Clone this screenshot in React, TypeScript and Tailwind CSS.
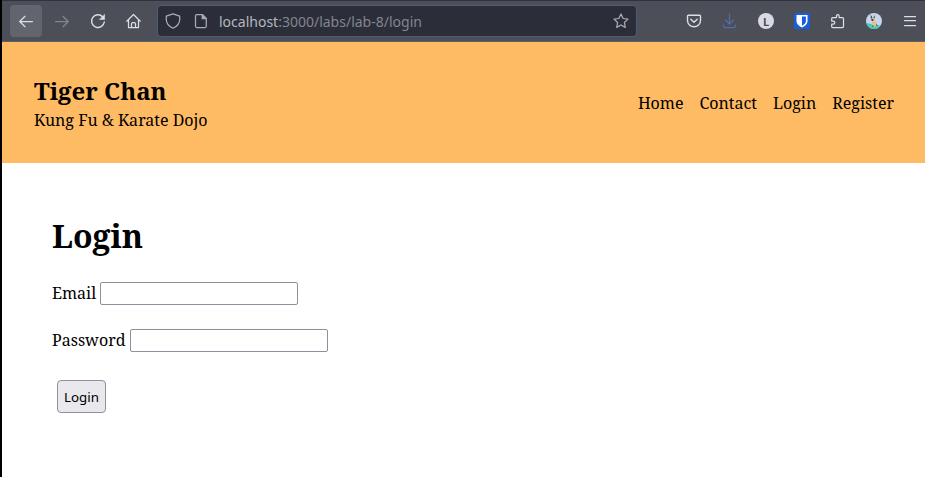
import React from 'react';

const ser = 'font-["Noto_Serif","DejaVu_Serif_Condensed","DejaVu_Serif",serif]';

type IconProps = { children: React.ReactNode; className?: string; label: string };

function Icon({ children, className = 'text-[#dcdee6]', label }: IconProps) {
  return (
    <svg aria-label={label} viewBox="0 0 16 16" width="16" height="16" fill="none" stroke="currentColor" strokeWidth="1.25" strokeLinecap="round" strokeLinejoin="round" className={`block shrink-0 ${className}`}>
      {children}
    </svg>
  );
}

function Toolbar() {
  return (
    <div className="h-[42px] bg-[#4c4f57] border-t border-t-[#30333d] border-b border-b-[#5d606a] flex items-center pl-2 pr-[7px]">
      <div className="w-8 h-8 rounded bg-[#62656d] flex items-center justify-center">
        <Icon label="Back"><path d="M14.5 8.5H1.7M7 3.3 1.7 8.5 7 13.7" /></Icon>
      </div>
      <Icon label="Forward" className="ml-3 text-[#83858c]"><path d="M1.5 8.5h12.8M9 3.3l5.3 5.2L9 13.7" /></Icon>
      <Icon label="Reload" className="ml-5 text-[#dcdee6]">
        <path d="M14.3 9A6.4 6.4 0 1 1 12.6 3.7" strokeWidth="1.4" />
        <path d="M14.6 1.5v5H9.6z" fill="currentColor" strokeWidth=".5" />
      </Icon>
      <Icon label="Home" className="ml-5 text-[#dcdee6]">
        <path d="M.8 8.2 7.5 1.5l6.7 6.7M2.5 7v7.5h10V7M5.5 14.5v-3.7q0-1.3 1.3-1.3h1.4q1.3 0 1.3 1.3v3.7" />
      </Icon>
      <div className="ml-[15px] w-[480px] h-8 rounded bg-[#2b2e39] border border-[#4f5b7a] flex items-center px-[7px]">
        <Icon label="Protection" className="text-[#a9abb1]"><path d="M8 .8 14.7 3.2v3.3c0 3.8-2.8 7-6.7 8.8-3.9-1.8-6.7-5-6.7-8.8V3.2z" /></Icon>
        <Icon label="Page" className="ml-3 text-[#a9abb1]">
          <path d="M3.7 1.5h5.6l4 4v7.8q0 1.2-1.2 1.2H3.7q-1.2 0-1.2-1.2V2.7q0-1.2 1.2-1.2z" /><path d="M9.2 1.7v4h4z" fill="currentColor" />
        </Icon>
        <span className='ml-[10px] pt-[2px] font-["Noto_Sans",sans-serif] text-[14px] leading-5 text-[#83858b] flex-1 whitespace-nowrap'>
          <span className="text-[#b5b7bf]">localhost</span>:3000/labs/lab-8/login
        </span>
        <Icon label="Bookmark" className="text-[#a9abb1]"><path d="m8 1 2.1 4.5 4.9.6-3.6 3.4.9 4.9L8 12l-4.3 2.4.9-4.9L1 6.1l4.9-.6z" /></Icon>
      </div>
      <div className="ml-[49px] flex items-center gap-5">
        <Icon label="Pocket"><path d="M2.5 2.2h11q1 0 1 1v4.3a6.5 6.3 0 0 1-13 0V3.2q0-1 1-1zM4.8 6.3 8 9.3l3.2-3" strokeWidth="1.4" /></Icon>
        <Icon label="Downloads" className="text-[#526da8]"><path d="M7.5 .8v10M3.5 7l4 4 4-4M1.5 12v1.3q0 1.2 1.2 1.2h9.6q1.2 0 1.2-1.2V12" /></Icon>
        <span className='size-4 rounded-full bg-[#d9dae3] text-[#4c4f57] font-["Noto_Sans",sans-serif] font-bold text-[11px] leading-[17px] text-center'>L</span>
        <Icon label="Password manager" className="text-white">
          <rect width="16" height="16" rx="2" fill="#175ddc" stroke="none" />
          <path d="M2.5 2h11v6.2c0 3-2.9 5-5.5 6.2-2.6-1.2-5.5-3.2-5.5-6.2z" fill="#fff" stroke="none" />
          <path d="M8 3.6h3.9v4.6c0 1.9-1.9 3.4-3.9 4.5z" fill="#175ddc" stroke="none" />
        </Icon>
        <Icon label="Extensions"><path d="M1.7 8V5.5q0-1 1-1h3.8V2.8a1.3 1.3 0 0 1 2.6 0v1.7h3.4q1 0 1 1v8q0 1-1 1H2.7q-1 0-1-1v-2.3h1.5a1.6 1.6 0 0 0 0-3.2z" /></Icon>
        <Icon label="Profile">
          <clipPath id="avatar"><circle cx="8" cy="8" r="8" /></clipPath>
          <g clipPath="url(#avatar)" stroke="none">
            <path fill="#c8d5ee" d="M0 0h16v16H0z" /><path fill="#42c9b3" d="M0 10l16 3v3H0z" />
            <path fill="#d8c49c" d="M5 4.5 6.5 4 8.3 4.5l.6 3 1.8 2.2.6 3.8H5.6l.3-5z" />
            <path fill="#453c32" d="M4.5 1.8 6.4 4.2 5 6zM8.9 2 8.6 5.5l-1.2-1zM5.2 6h2.4l-.6 2h-1.2zM6 12.5h1.5v1H6zM10.3 10.5l1.4 2.2-1.2.6z" />
          </g>
        </Icon>
        <Icon label="Menu"><path d="M2.5 3.5h11M2.5 7.5h11M2.5 12.5h11" /></Icon>
      </div>
    </div>
  );
}

function Field({ label, type }: { label: string; type: string }) {
  return (
    <div className="mt-[24px] h-[23px] flex items-center gap-1">
      <label className="leading-6 pb-[2px]">{label}</label>
      <input type={type} className="w-[198px] h-[23px] border border-[#8f8f9d] rounded-[2px]" />
    </div>
  );
}

export default function App() {
  return (
    <div className={`w-[925px] h-[477px] overflow-hidden bg-white border-l-2 border-black text-black text-[16px] ${ser}`}>
      <Toolbar />
      <header className="h-[121px] bg-[#ffbb63] flex items-center justify-between pl-8 pr-[31px]">
        <div className="whitespace-nowrap">
          <div className="text-[24px] leading-[33px] font-bold">Tiger Chan</div>
          <div className="leading-6 pt-[1px]">Kung Fu &amp; Karate Dojo</div>
        </div>
        <nav className="flex gap-4 leading-6"><a>Home</a><a>Contact</a><a>Login</a><a>Register</a></nav>
      </header>
      <main className="pl-[50px] pt-[51px]">
        <h1 className="text-[32px] leading-[44px] font-bold">Login</h1>
        <Field label="Email" type="email" />
        <Field label="Password" type="password" />
        <button className='mt-[28px] ml-[5px] w-[49px] h-[33px] pt-[2px] block border border-[#8f8f9d] rounded bg-[#e9e9ed] font-["Noto_Sans",sans-serif] text-[13.333px]'>Login</button>
      </main>
    </div>
  );
}
